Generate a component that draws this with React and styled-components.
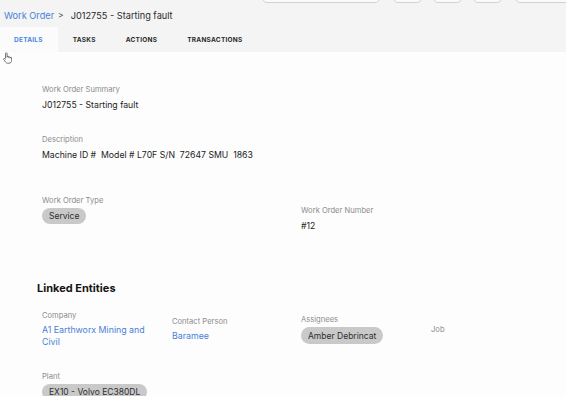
import styled, { createGlobalStyle } from "styled-components";

const Global = createGlobalStyle`
    html, body {
        margin: 0;
        padding: 0;
        background: #fdfdfd;
        font-family: Inter, "Open Sans", "Liberation Sans", sans-serif;
        overflow: hidden;
    }
`

const Pagina = styled.div`
    width: 566px;
    height: 396px;
    background: #fdfdfd;
    overflow: hidden;
`
const Cabecera = styled.header`
    background: #f4f4f4;
    height: 52px;
    display: flex;
    flex-direction: column;
`
const Herramientas = styled.div`
    height: 3px;
    display: flex;
    align-items: flex-end;
    overflow: hidden;
    padding-left: 262px;
    gap: 11px;
`
const Boton = styled.div`
    flex: none;
    width: ${({$ancho}) => $ancho}px;
    height: 20px;
    border: 1px solid #d2d2d2;
    border-radius: 5px;
    background: #fafafa;
    box-sizing: border-box;
    margin-right: ${({$extra}) => $extra || 0}px;
`
const Migas = styled.div`
    height: 24px;
    display: flex;
    align-items: center;
    padding-left: 4px;
    font-size: 9.2px;
    color: #2b2b2b;
    gap: 4px;
`
const Enlace = styled.a`
    color: #4a80d8;
    text-decoration: none;
`
const Separador = styled.span`
    font-size: 8.5px;
    color: #444;
    margin-right: 3px;
`
const Pestanas = styled.nav`
    display: flex;
    height: 25px;
`
const Pestana = styled.div`
    display: flex;
    align-items: center;
    padding: 0 15px;
    &:first-child {
        padding-left: 14px;
    }
    background: ${({$activa}) => ($activa ? "#fbfbfb" : "transparent")};
    color: ${({$activa}) => ($activa ? "#4a86e0" : "#2a2a2a")};
    font-size: 6.5px;
    font-weight: 700;
    letter-spacing: 0.25px;
`
const Cursor = styled.div`
    height: 0;
    padding-left: 3px;
    position: relative;
    top: -4px;
`
const Contenido = styled.main`
    padding: 33px 0 0 42px;
`
const Bloque = styled.div`
    display: grid;
    grid-template-columns: 259px 259px;
    align-items: start;
    margin-bottom: ${({$mb}) => $mb}px;
`
const Campo = styled.div`
    display: flex;
    flex-direction: column;
    align-items: flex-start;
    gap: ${({$gap}) => ($gap === undefined ? 4 : $gap)}px;
    padding-top: ${({$pt}) => $pt || 0}px;
    grid-column: ${({$ancho}) => ($ancho ? "1 / -1" : "auto")};
`
const Etiqueta = styled.span`
    font-size: 7.6px;
    color: #8c8c8c;
    line-height: 10px;
`
const Valor = styled.span`
    font-size: 8.7px;
    color: #222;
    line-height: 12px;
    white-space: pre;
`
const ValorEnlace = styled.span`
    font-size: 8.8px;
    color: #4a80d8;
    line-height: 12px;
    max-width: 112px;
`
const Chip = styled.span`
    display: inline-flex;
    align-items: center;
    height: ${({$alto}) => $alto || 16}px;
    padding: 0 7px;
    border-radius: 9px;
    background: #c9c9c9;
    color: #2e2e2e;
    font-size: 8.5px;
`
const Titulo = styled.h2`
    margin: 0 0 16px -5px;
    font-size: 11px;
    font-weight: 700;
    color: #141414;
`
const Entidades = styled.div`
    display: grid;
    grid-template-columns: 130px 129px 130px 130px;
    align-items: center;
    margin-bottom: 24px;
`

const Mano = () => (
    <svg width="9" height="12" viewBox="0 0 9 12" fill="none" stroke="#555" strokeWidth="0.8" strokeLinejoin="round">
        <path d="M2.5 6.5V1.6a.8.8 0 0 1 1.6 0V5.5m0-.6a.8.8 0 0 1 1.6 0v.8m0-.3a.8.8 0 0 1 1.5 0v.9m0-.3a.7.7 0 0 1 1.4 0v2.4c0 1.6-1 2.8-2.6 2.8H4.6C3.5 11.2 2.8 10.4 2 9.4L.7 7.6a.7.7 0 0 1 1.1-.9l.7.8" />
    </svg>
)

const App = () => {
    const pestanas = [
        { nombre: "DETAILS", activa: true },
        { nombre: "TASKS" },
        { nombre: "ACTIONS" },
        { nombre: "TRANSACTIONS" },
    ]
    return (
        <Pagina>
            <Global />
            <Cabecera>
                <Herramientas>
                    <Boton $ancho={118} $extra={2} />
                    <Boton $ancho={29} />
                    <Boton $ancho={29} />
                    <Boton $ancho={29} $extra={2} />
                    <Boton $ancho={60} />
                </Herramientas>
                <Migas>
                    <Enlace href="#">Work Order</Enlace>
                    <Separador>&gt;</Separador>
                    <span>J012755 - Starting fault</span>
                </Migas>
                <Pestanas>
                    {pestanas.map((p) => (
                        <Pestana key={p.nombre} $activa={p.activa}>{p.nombre}</Pestana>
                    ))}
                </Pestanas>
            </Cabecera>
            <Cursor><Mano /></Cursor>
            <Contenido>
                <Bloque $mb={24}>
                    <Campo $ancho>
                        <Etiqueta>Work Order Summary</Etiqueta>
                        <Valor>J012755 - Starting fault</Valor>
                    </Campo>
                </Bloque>
                <Bloque $mb={35}>
                    <Campo $ancho>
                        <Etiqueta>Description</Etiqueta>
                        <Valor>{"Machine ID #  Model # L70F S/N  72647 SMU  1863"}</Valor>
                    </Campo>
                </Bloque>
                <Bloque $mb={49}>
                    <Campo $gap={2}>
                        <Etiqueta>Work Order Type</Etiqueta>
                        <Chip>Service</Chip>
                    </Campo>
                    <Campo $pt={10}>
                        <Etiqueta>Work Order Number</Etiqueta>
                        <Valor>#12</Valor>
                    </Campo>
                </Bloque>
                <Titulo>Linked Entities</Titulo>
                <Entidades>
                    <Campo $gap={3}>
                        <Etiqueta>Company</Etiqueta>
                        <ValorEnlace>A1 Earthworx Mining and Civil</ValorEnlace>
                    </Campo>
                    <Campo $gap={3}>
                        <Etiqueta>Contact Person</Etiqueta>
                        <ValorEnlace>Baramee</ValorEnlace>
                    </Campo>
                    <Campo $gap={2}>
                        <Etiqueta>Assignees</Etiqueta>
                        <Chip $alto={17}>Amber Debrincat</Chip>
                    </Campo>
                    <Campo>
                        <Etiqueta>Job</Etiqueta>
                    </Campo>
                </Entidades>
                <Campo $gap={2}>
                    <Etiqueta>Plant</Etiqueta>
                    <Chip>EX10 - Volvo EC380DL</Chip>
                </Campo>
            </Contenido>
        </Pagina>
    )
}

export default App;
